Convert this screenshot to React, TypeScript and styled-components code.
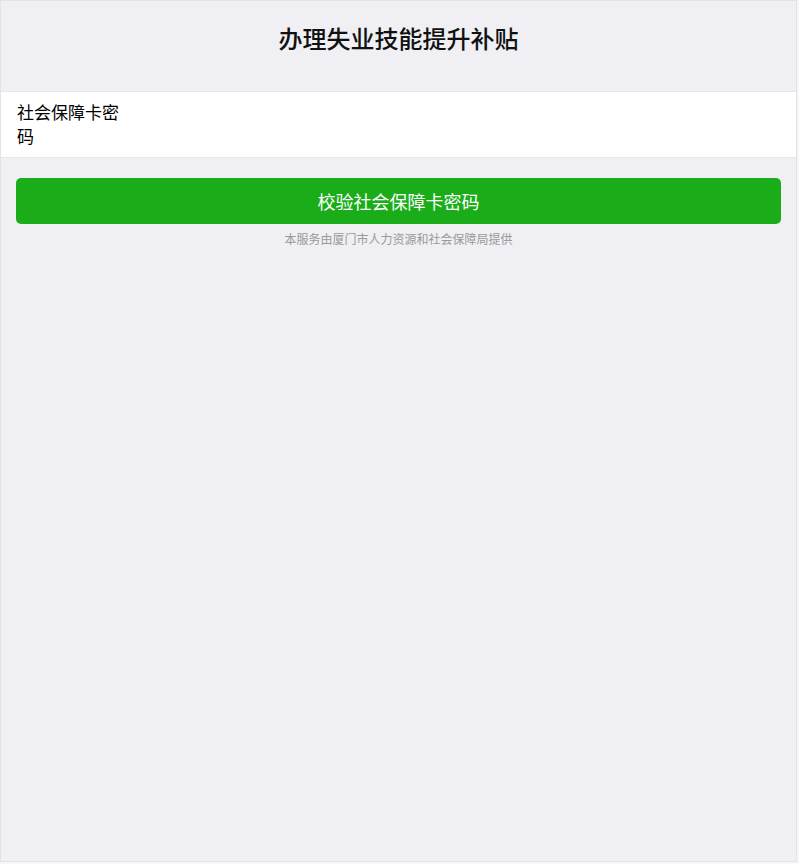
import styled, { createGlobalStyle } from 'styled-components';

const GlobalStyle = createGlobalStyle`
	html, body {
		margin: 0;
		padding: 0;
		background: #f6f6f6;
	}
	* {
		box-sizing: border-box;
	}
`;

export default function App() {
	return (
		<>
			<GlobalStyle/>
			<Page>
				<Header>
					<Title>办理失业技能提升补贴</Title>
				</Header>
				<Cell>
					<Label>社会保障卡密码</Label>
					<Input type="password"/>
				</Cell>
				<Actions>
					<Button>校验社会保障卡密码</Button>
					<Notice>本服务由厦门市人力资源和社会保障局提供</Notice>
				</Actions>
			</Page>
		</>
	);
}

const Page = styled.div`
	width: 797px;
	height: 862px;
	border: 1px solid #e3e3e6;
	background: #efeff4;
	display: flex;
	flex-direction: column;
	font-family: "Noto Sans CJK SC", "Noto Sans", sans-serif;
`;

const Header = styled.div`
	height: 91px;
	display: flex;
	justify-content: center;
	padding-top: 20px;
	border-bottom: 1px solid #e5e5ea;
`;

const Title = styled.h1`
	margin: 0;
	font-family: "Noto Sans CJK SC", serif;
	font-size: 24px;
	font-weight: 500;
	line-height: 34px;
	color: #111;
`;

const Cell = styled.div`
	background: #fff;
	padding: 8px 16px 9px;
	display: flex;
	align-items: center;
	border-bottom: 1px solid #e5e5ea;
`;

const Label = styled.label`
	width: 105px;
	font-size: 17px;
	line-height: 24px;
	color: #000;
`;

const Input = styled.input`
	flex: 1;
	border: 0;
	outline: 0;
	font-size: 17px;
	background: transparent;
`;

const Actions = styled.div`
	padding: 20px 15px 0;
	display: flex;
	flex-direction: column;
	align-items: center;
	gap: 7px;
`;

const Button = styled.button`
	width: 100%;
	height: 46px;
	border: 0;
	border-radius: 5px;
	background: #1aad19;
	color: #fff;
	font-family: "Noto Sans CJK SC", sans-serif;
	font-size: 18px;
	cursor: pointer;
`;

const Notice = styled.p`
	margin: 0;
	font-size: 12px;
	line-height: 16px;
	color: #999;
`;
